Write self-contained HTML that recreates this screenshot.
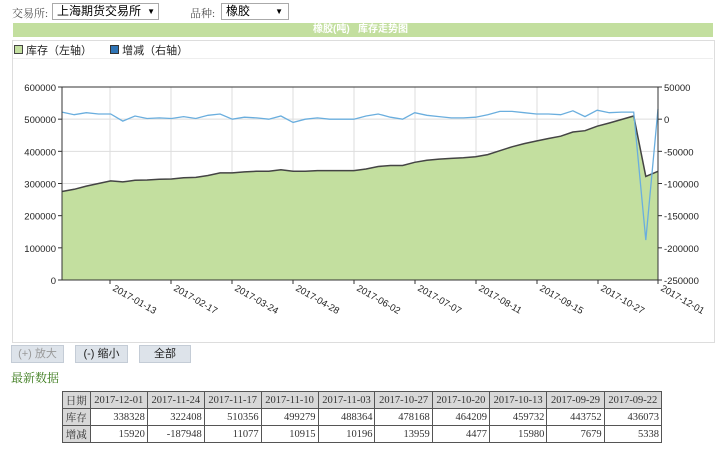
<!DOCTYPE html>
<html><head><meta charset="utf-8">
<style>
body{margin:0;width:720px;height:450px;background:#fff;font-family:"Liberation Sans","Noto Sans CJK SC",sans-serif;position:relative;overflow:hidden}
.abs{position:absolute}
.sel{border:1px solid #aaa;height:15px;font-size:12px;line-height:15px;color:#000;padding-left:4px;box-sizing:content-box}
.btn{position:absolute;top:345px;height:16px;background:#dde3ea;border:1px solid #c4ccd6;font-size:11px;line-height:16px;text-align:center}
table{border-collapse:collapse;font-family:"Liberation Serif","Noto Serif CJK SC",serif;font-size:10.5px;color:#333}
td{border:1px solid #555;height:16px;padding:0 2px;text-align:right}
td.h{background:#d8d8d8;text-align:center}
</style></head><body>
<div class="abs" style="left:12px;top:5px;font-size:11px;color:#555;font-family:'Liberation Serif','Noto Serif CJK SC',serif">交易所:</div>
<div class="abs sel" style="left:52px;top:3px;width:101px">上海期货交易所<span style="position:absolute;right:3px;font-size:8px">▼</span></div>
<div class="abs" style="left:190px;top:5px;font-size:11px;color:#555;font-family:'Liberation Serif','Noto Serif CJK SC',serif">品种:</div>
<div class="abs sel" style="left:221px;top:3px;width:62px">橡胶<span style="position:absolute;right:5px;font-size:8px">▼</span></div>
<div class="abs" style="left:13px;top:23px;width:700px;height:14px;background:#c3df9f;color:#fff;font-size:10px;font-weight:bold;line-height:14px;text-align:right"><span style="position:absolute;left:300px">橡胶(吨)&nbsp;&nbsp;&nbsp;库存走势图</span></div>
<div class="abs" style="left:12px;top:40px;width:701px;height:301px;border:1px solid #ddd"></div>
<div class="abs" style="left:14px;top:42px;font-size:11px;color:#222"><span style="display:inline-block;width:7px;height:7px;border:1px solid #444;background:#c3df9f"></span> 库存（左轴）<span style="margin-left:18px;display:inline-block;width:7px;height:7px;border:1px solid #333;background:#2f74b5"></span> 增减（右轴）</div>
<div class="abs" style="left:13px;top:58px;width:700px;height:1px;background:#eee"></div>
<svg id="c" class="abs" style="left:0;top:0" width="720" height="345"></svg>
<div class="btn" style="left:11px;width:51px;color:#999">(+) 放大</div>
<div class="btn" style="left:75px;width:51px;color:#222">(-) 缩小</div>
<div class="btn" style="left:139px;width:50px;color:#222">全部</div>
<div class="abs" style="left:11px;top:369px;font-size:12px;color:#3a7a1a;font-family:'Liberation Serif','Noto Serif CJK SC',serif">最新数据</div>
<table class="abs" style="left:62px;top:391px;width:600px">
<tr><td class="h">日期</td><td class="h">2017-12-01</td><td class="h">2017-11-24</td><td class="h">2017-11-17</td><td class="h">2017-11-10</td><td class="h">2017-11-03</td><td class="h">2017-10-27</td><td class="h">2017-10-20</td><td class="h">2017-10-13</td><td class="h">2017-09-29</td><td class="h">2017-09-22</td></tr>
<tr><td class="h">库存</td><td>338328</td><td>322408</td><td>510356</td><td>499279</td><td>488364</td><td>478168</td><td>464209</td><td>459732</td><td>443752</td><td>436073</td></tr>
<tr><td class="h">增减</td><td>15920</td><td>-187948</td><td>11077</td><td>10915</td><td>10196</td><td>13959</td><td>4477</td><td>15980</td><td>7679</td><td>5338</td></tr>
</table>
<script>
var v=[275,282,292,300,308,305,310,311,313,314,318,319,325,333,333,336,338,338,343,338,338,340,340,340,340,345,353,356,356,366,372,376,378,380,383,390,402,414,424,432,440,447,460,464,478,488,499,510,322,338];
var L=62,R=658,T=87,B=280,st=(R-L)/49,s='';
function yl(k){return B-k*1000/600000*(B-T)}
function yr(d){return T+(50000-d)/300000*(B-T)}
for(var i=0;i<7;i++){var y=T+i*(B-T)/6;s+='<line x1="'+L+'" x2="'+R+'" y1="'+y+'" y2="'+y+'" stroke="#ddd"/>';
s+='<text x="56" y="'+(y+4)+'" font-size="9.5" text-anchor="end" fill="#222">'+((6-i)*100000||0)+'</text>';
s+='<text x="664" y="'+(y+4)+'" font-size="9.5" fill="#222">'+(50000-i*50000)+'</text>';
s+='<line x1="58" x2="'+L+'" y1="'+y+'" y2="'+y+'" stroke="#333"/><line x1="'+R+'" x2="662" y1="'+y+'" y2="'+y+'" stroke="#333"/>';}
var labs=['2017-01-13','2017-02-17','2017-03-24','2017-04-28','2017-06-02','2017-07-07','2017-08-11','2017-09-15','2017-10-27','2017-12-01'];
for(var j=0;j<10;j++){var x=j<9?110+j*61:R;s+='<line x1="'+x+'" x2="'+x+'" y1="'+T+'" y2="'+B+'" stroke="#ddd"/><line x1="'+x+'" x2="'+x+'" y1="'+B+'" y2="'+(B+4)+'" stroke="#333"/>';
s+='<text transform="translate('+(x+2)+','+(B+10)+') rotate(30)" font-size="9.5" fill="#222">'+labs[j]+'</text>';}
var p='M'+L+','+B,q='',b='';
for(i=0;i<v.length;i++){var x=L+i*st;p+=' L'+x.toFixed(1)+','+yl(v[i]).toFixed(1);q+=(i?' L':'M')+x.toFixed(1)+','+yl(v[i]).toFixed(1);
var d=i?(v[i]-v[i-1])*1000:11000;if(i==48)d=-187948;if(i==49)d=15920;
b+=(i?' L':'M')+x.toFixed(1)+','+yr(d).toFixed(1);}
p+=' L'+R+','+B+' Z';
s+='<path d="'+p+'" fill="#c3df9f"/><path d="'+q+'" fill="none" stroke="#444" stroke-width="1.5"/>';
s+='<path d="'+b+'" fill="none" stroke="#6aaede" stroke-width="1.3"/>';
s+='<rect x="'+L+'" y="'+T+'" width="'+(R-L)+'" height="'+(B-T)+'" fill="none" stroke="#333"/>';
document.getElementById('c').innerHTML=s;
</script>
</body></html>
